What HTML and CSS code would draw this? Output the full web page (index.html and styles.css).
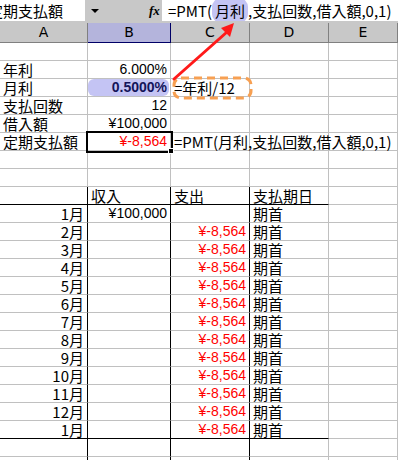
FILE: index.html
```html
<!DOCTYPE html>
<html lang="ja">
<head>
  <meta charset="UTF-8" />
  <title>PMT 定期支払額</title>
  <link rel="stylesheet" href="styles.css">
</head>
<body>
  <div class="bar">
    <div class="name-box">定期支払額</div>
    <div class="drop"></div>
    <div class="fx">fx</div>
    <div class="formula">=PMT(<span class="hl">月利</span>,支払回数,借入額,0,1)</div>
  </div>

  <table class="sheet">
    <colgroup><col class="ca"><col class="cb"><col class="cc"><col class="cd"><col class="ce"></colgroup>
    <thead>
      <tr><th>A</th><th class="on">B</th><th>C</th><th>D</th><th>E</th></tr>
    </thead>
    <tbody>
      <tr><td></td><td></td><td></td><td></td><td></td></tr>
      <tr><td>年利</td><td class="n">6.000%</td><td></td><td></td><td></td></tr>
      <tr><td>月利</td><td class="n"><span class="rate">0.5000%</span></td><td class="f">=年利/12</td><td></td><td></td></tr>
      <tr><td>支払回数</td><td class="n">12</td><td></td><td></td><td></td></tr>
      <tr><td>借入額</td><td class="n">¥100,000</td><td></td><td></td><td></td></tr>
      <tr><td>定期支払額</td><td class="n red sel">¥-8,564<span class="handle"></span></td><td class="f">=PMT(月利,支払回数,借入額,0,1)</td><td></td><td></td></tr>
      <tr><td></td><td></td><td></td><td></td><td></td></tr>
      <tr><td></td><td></td><td></td><td></td><td></td></tr>
      <tr class="head"><td class="bl"></td><td class="bl">収入</td><td class="bl">支出</td><td>支払期日</td><td class="open"></td></tr>
      <tr><td class="bl r">1月</td><td class="bl n">¥100,000</td><td class="bl"></td><td>期首</td><td></td></tr>
      <tr><td class="bl r">2月</td><td class="bl"></td><td class="bl n red">¥-8,564</td><td>期首</td><td></td></tr>
      <tr><td class="bl r">3月</td><td class="bl"></td><td class="bl n red">¥-8,564</td><td>期首</td><td></td></tr>
      <tr><td class="bl r">4月</td><td class="bl"></td><td class="bl n red">¥-8,564</td><td>期首</td><td></td></tr>
      <tr><td class="bl r">5月</td><td class="bl"></td><td class="bl n red">¥-8,564</td><td>期首</td><td></td></tr>
      <tr><td class="bl r">6月</td><td class="bl"></td><td class="bl n red">¥-8,564</td><td>期首</td><td></td></tr>
      <tr><td class="bl r">7月</td><td class="bl"></td><td class="bl n red">¥-8,564</td><td>期首</td><td></td></tr>
      <tr><td class="bl r">8月</td><td class="bl"></td><td class="bl n red">¥-8,564</td><td>期首</td><td></td></tr>
      <tr><td class="bl r">9月</td><td class="bl"></td><td class="bl n red">¥-8,564</td><td>期首</td><td></td></tr>
      <tr><td class="bl r">10月</td><td class="bl"></td><td class="bl n red">¥-8,564</td><td>期首</td><td></td></tr>
      <tr><td class="bl r">11月</td><td class="bl"></td><td class="bl n red">¥-8,564</td><td>期首</td><td></td></tr>
      <tr><td class="bl r">12月</td><td class="bl"></td><td class="bl n red">¥-8,564</td><td>期首</td><td></td></tr>
      <tr class="foot"><td class="bl r">1月</td><td class="bl"></td><td class="bl n red">¥-8,564</td><td>期首</td><td class="open"></td></tr>
      <tr><td class="bl"></td><td class="bl"></td><td class="bl"></td><td></td><td></td></tr>
      <tr><td class="bl"></td><td class="bl"></td><td class="bl"></td><td></td><td></td></tr>
    </tbody>
  </table>

  <!-- callouts drawn over the sheet -->
  <svg class="marks" width="398" height="460" viewBox="0 0 398 460">
    <rect x="174" y="78" width="77" height="20" rx="7" fill="none" stroke="#f7a052" stroke-width="3" stroke-dasharray="8 5"/>
    <line x1="174" y1="79" x2="227" y2="32" stroke="#ff1a1a" stroke-width="3" stroke-linecap="round"/>
    <polygon points="234,23 221,28 230,37" fill="#ff1a1a"/>
  </svg>
</body>
</html>
```

FILE: styles.css
```css
* { box-sizing: border-box; }
body { margin: 0; width: 398px; height: 460px; overflow: hidden; position: relative; background: #fff; color: #000; font-family: "Noto Sans CJK JP", sans-serif; font-size: 15px; }

.bar { display: flex; height: 23px; background: #c8c8c8; }
.name-box { width: 101px; margin-left: -16px; height: 21px; line-height: 21px; padding-left: 4px; background: #fff; white-space: nowrap; overflow: hidden; }
.drop { width: 20px; height: 21px; display: flex; align-items: center; justify-content: center; }
.drop::after { content: ""; border-left: 4px solid transparent; border-right: 4px solid transparent; border-top: 4px solid #000; }
.fx { margin-left: 44px; width: 13px; height: 21px; font: italic bold 13px/21px "Liberation Serif", serif; }
.formula { flex: 1; height: 21px; line-height: 21px; padding-left: 6px; background: #fff; white-space: nowrap; overflow: hidden; }
.hl { background: #c4c4f4; border-radius: 9px; padding: 2px 3px; }

.sheet { table-layout: fixed; width: 398px; border-collapse: separate; border-spacing: 0; }
.ca { width: 88px; }
.cb { width: 83px; }
.cc { width: 79px; }
.cd { width: 79px; }
.ce { width: 69px; }
.sheet th { height: 20px; padding: 0; font: 14px/19px "DejaVu Sans", sans-serif; font-weight: normal; background: #c8c8c8; border-right: 1px solid #808080; border-bottom: 1px solid #808080; }
.sheet th.on { background: #b4b4dc; border-right-color: #000066; border-bottom-color: #000066; }
.sheet tr { height: 18px; }
.sheet td { padding: 0 3px; line-height: 17px; white-space: nowrap; border-right: 1px solid #c0c0c0; border-bottom: 1px solid #c0c0c0; }

.n { text-align: right; font-family: "Liberation Sans", sans-serif; font-size: 14px; }
.r { text-align: right; }
.f { padding-left: 5px; }
.red { color: #ff0000; }
.rate { display: block; margin: 0 -2px 0 -3px; padding-right: 2px; background: #c4c4f4; border-radius: 6px; font-weight: bold; color: #14145a; }
.sel { position: relative; outline: 2px solid #000; }
.handle { position: absolute; right: -4px; bottom: -4px; width: 6px; height: 6px; background: #000; border: 1px solid #fff; }

.sheet td.bl { border-right-color: #000; }
.head td, .foot td { border-bottom-color: #000; }
.head td.open, .foot td.open { border-bottom-color: #c0c0c0; }

.marks { position: absolute; left: 0; top: 0; pointer-events: none; }
```
